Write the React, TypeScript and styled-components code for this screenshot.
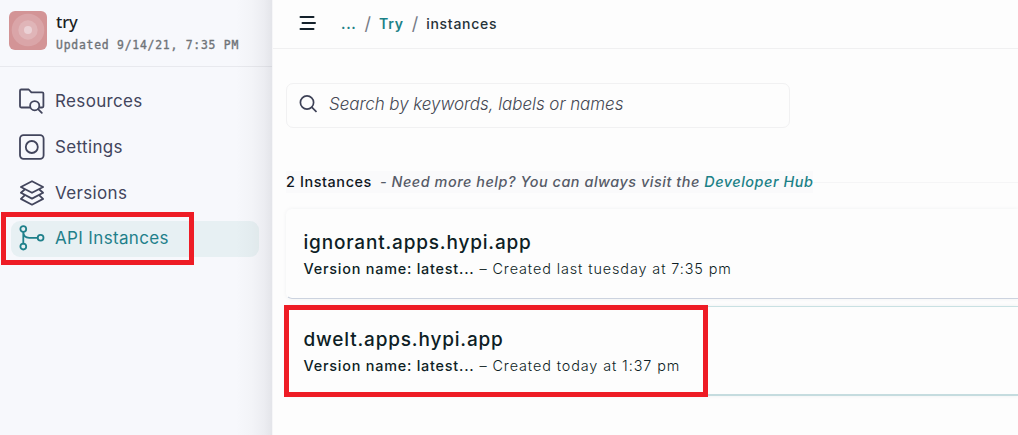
import React from 'react';
import styled, { createGlobalStyle } from 'styled-components';

const GlobalStyle = createGlobalStyle`
  * { box-sizing: border-box; }
  body {
    margin: 0;
    overflow: hidden;
    background: #fdfdfd;
    font-family: Inter, 'Liberation Sans', sans-serif;
    color: #0e1e25;
  }
`;

const Shell = styled.div`
  position: relative;
  display: flex;
  width: 1018px;
  height: 435px;
  overflow: hidden;
`;

const Sidebar = styled.aside`
  flex: 0 0 273px;
  background: linear-gradient(to right, transparent 236px, rgba(60, 62, 75, 0.025) 252px, rgba(60, 62, 75, 0.06) 264px, rgba(60, 62, 75, 0.11) 273px), #f7f8fc;
`;

const Project = styled.div`
  display: flex;
  gap: 9px;
  height: 67px;
  padding: 11px 9px 0;
  border-bottom: 1px solid rgba(40, 45, 60, 0.07);
`;

const Avatar = styled.svg`
  flex: none;
  width: 38px;
  height: 39px;
`;

const ProjectName = styled.div`
  font: 500 16.5px/22px 'Noto Sans', sans-serif;
  letter-spacing: -0.1px;
  color: #1b1e24;
`;

const Updated = styled.div`
  margin-top: 4px;
  font: 400 11.4px/16px 'DejaVu Sans Mono', monospace;
  letter-spacing: 0.77px;
  -webkit-text-stroke: 0.35px #6f7378;
  white-space: nowrap;
  color: #6f7378;
`;

const Nav = styled.nav`
  display: flex;
  flex-direction: column;
  gap: 10px;
  padding: 16px 14px 0 11px;
`;

const NavItem = styled.a<{ $active?: boolean }>`
  display: flex;
  align-items: center;
  gap: 10px;
  height: 36px;
  padding: ${(p) => (p.$active ? '0 0 2px 8px' : '0 0 0 8px')};
  border-radius: 9px;
  font-size: 17px;
  letter-spacing: 0.35px;
  color: ${(p) => (p.$active ? '#1f808b' : '#42455c')};
  background: ${(p) => (p.$active ? 'rgba(31, 139, 128, 0.07)' : 'transparent')};
  svg { flex: none; }
`;

const Main = styled.main`
  flex: 1;
  min-width: 0;
  border-left: 1px solid #f6f6f8;
  margin-left: -1px;
  background: #fdfdfd;
`;

const TopBar = styled.header`
  display: flex;
  align-items: center;
  height: 49px;
  padding: 0 0 2px 25px;
  border-bottom: 1px solid #f0f0f1;
`;

const Crumbs = styled.div`
  display: flex;
  align-items: center;
  margin: 1px 0 0 25px;
  font-size: 14px;
  letter-spacing: 0.72px;
`;

const Crumb = styled.span<{ $link?: boolean }>`
  color: ${(p) => (p.$link ? '#1b8187' : '#263238')};
  font-weight: ${(p) => (p.$link ? 600 : 500)};
`;

const Slash = styled.span`
  margin: 0 8px;
  font-size: 18px;
  font-weight: 400;
  letter-spacing: 0;
  color: #767b86;
`;

const Content = styled.section`
  padding: 34px 0 0 13px;
`;

const Search = styled.div`
  display: flex;
  align-items: center;
  gap: 12px;
  width: 504px;
  height: 45px;
  padding: 0 0 3px 12px;
  border: 1px solid #f1f1f2;
  border-radius: 7px;
  font-size: 17px;
  font-style: italic;
  font-weight: 300;
  letter-spacing: -0.06px;
  color: #454954;
`;

const Heading = styled.div`
  display: flex;
  align-items: center;
  height: 22px;
  margin: 43px 0 16px;
  font-size: 14.4px;
  font-weight: 500;
  white-space: nowrap;
  &::after {
    content: '';
    flex: 1;
    height: 1px;
    background: #f5f5f6;
  }
`;

const HeadingText = styled.div`
  display: flex;
  gap: 8px;
  line-height: 22px;
  background: #fafafb;
`;

const Count = styled.span`
  letter-spacing: 0.6px;
  color: #10171f;
`;

const Help = styled.em`
  letter-spacing: 0.54px;
  color: #565b67;
  a { color: #1b8187; }
`;

const Card = styled.article<{ $selected?: boolean }>`
  height: 90px;
  margin-bottom: 7px;
  padding: 21px 17px 0 16.5px;
  border: 1px solid ${(p) => (p.$selected ? '#c9e1e3' : 'transparent')};
  border-bottom: ${(p) => (p.$selected ? '2px solid #c5dcdf' : '1px solid #ccd3df')};
  border-right: 0;
  border-radius: 6px 0 0 6px;
  box-shadow: 0 0 4px rgba(40, 50, 70, 0.06);
`;

const Domain = styled.h2`
  margin: 0;
  font-size: 19px;
  line-height: 24px;
  font-weight: 500;
  letter-spacing: 0.82px;
`;

const Meta = styled.div`
  margin-top: 4px;
  font-size: 14.4px;
  line-height: 20px;
  font-weight: 300;
  letter-spacing: 0.9px;
  b { font-weight: 500; letter-spacing: 0.78px; }
`;

const Highlight = styled.div<{ $x: number; $y: number; $w: number; $h: number }>`
  position: absolute;
  left: ${(p) => p.$x}px;
  top: ${(p) => p.$y}px;
  width: ${(p) => p.$w}px;
  height: ${(p) => p.$h}px;
  border: 5px solid #ee1c25;
  pointer-events: none;
`;

const NavIcon = ({ children }: { children: React.ReactNode }) => (
  <svg width="26" height="26" viewBox="0 0 26 26" fill="none" stroke="currentColor" strokeWidth="1.8" strokeLinejoin="round" strokeLinecap="round">
    {children}
  </svg>
);

const FolderSearchIcon = () => (
  <NavIcon>
    <path d="M10.5 19.5H2.2Q1 19.5 1 18.3V2.7Q1 1.5 2.2 1.5H9.7L12.4 4.4H23.2Q24.4 4.4 24.4 5.6V18.3Q24.4 19.5 23.2 19.5H20.6" />
    <circle cx="15.7" cy="17.7" r="4.6" />
    <path d="M19.1 21.1L22.8 24.8" />
  </NavIcon>
);

const SettingsIcon = () => (
  <NavIcon>
    <rect x="1" y="1.2" width="23.6" height="23.6" rx="3.5" />
    <circle cx="12.8" cy="13" r="6" />
  </NavIcon>
);

const LayersIcon = () => (
  <NavIcon>
    <path d="M13 1.2L24.1 7L13 12.8L1.9 7Z" />
    <path d="M5.4 9.8L1.9 12.8L13 18.6L24.1 12.8L20.6 9.8" />
    <path d="M5.4 15.7L1.9 18.9L13 24.7L24.1 18.9L20.6 15.7" />
  </NavIcon>
);

const BranchIcon = () => (
  <NavIcon>
    <circle cx="4.3" cy="4" r="2.9" />
    <circle cx="4.3" cy="21.6" r="2.9" />
    <circle cx="21.6" cy="12.8" r="2.9" />
    <path d="M4.3 7V18.6M4.3 7.3Q4.5 12.8 10.2 12.8H18.5" />
  </NavIcon>
);

const NAV = [
  { label: 'Resources', Icon: FolderSearchIcon },
  { label: 'Settings', Icon: SettingsIcon },
  { label: 'Versions', Icon: LayersIcon },
  { label: 'API Instances', Icon: BranchIcon, active: true },
];

const INSTANCES = [
  { domain: 'ignorant.apps.hypi.app', created: 'Created last tuesday at 7:35 pm' },
  { domain: 'dwelt.apps.hypi.app', created: 'Created today at 1:37 pm', selected: true },
];

export default function App() {
  return (
    <Shell>
      <GlobalStyle />
      <Sidebar>
        <Project>
          <Avatar viewBox="0 0 38 39">
            <rect width="38" height="39" rx="6" fill="#d39496" />
            <circle cx="19" cy="19" r="16.3" fill="#daa5a8" />
            <circle cx="19" cy="19" r="9.7" fill="#e0b5b8" />
            <circle cx="19" cy="19" r="4" fill="#ebd1d5" />
          </Avatar>
          <div>
            <ProjectName>try</ProjectName>
            <Updated>Updated 9/14/21, 7:35 PM</Updated>
          </div>
        </Project>
        <Nav>
          {NAV.map(({ label, Icon, active }) => (
            <NavItem key={label} $active={active}>
              <Icon />
              {label}
            </NavItem>
          ))}
        </Nav>
      </Sidebar>
      <Main>
        <TopBar>
          <svg width="18" height="14" viewBox="0 0 18 14" fill="none" stroke="#14212b" strokeWidth="2" strokeLinecap="round">
            <path d="M2.5 1H15.5M4.5 7H17M2.5 13H15.5" />
          </svg>
          <Crumbs>
            <Crumb $link>...</Crumb>
            <Slash>/</Slash>
            <Crumb $link>Try</Crumb>
            <Slash>/</Slash>
            <Crumb>instances</Crumb>
          </Crumbs>
        </TopBar>
        <Content>
          <Search>
            <svg width="18" height="18" viewBox="0 0 18 18" fill="none" stroke="#3d4156" strokeWidth="1.7">
              <circle cx="8" cy="7.5" r="6.6" />
              <path d="M12.7 12.2L17.5 17" />
            </svg>
            <span>Search by keywords, labels or names</span>
          </Search>
          <Heading>
            <HeadingText>
              <Count>2 Instances</Count>
              <Help>- Need more help? You can always visit the <a>Developer Hub</a></Help>
            </HeadingText>
          </Heading>
          {INSTANCES.map((item) => (
            <Card key={item.domain} $selected={item.selected}>
              <Domain>{item.domain}</Domain>
              <Meta>
                <b>Version name: latest...</b> – {item.created}
              </Meta>
            </Card>
          ))}
        </Content>
      </Main>
      <Highlight $x={1} $y={212} $w={193} $h={53} />
      <Highlight $x={284} $y={305} $w={424} $h={92} />
    </Shell>
  );
}
